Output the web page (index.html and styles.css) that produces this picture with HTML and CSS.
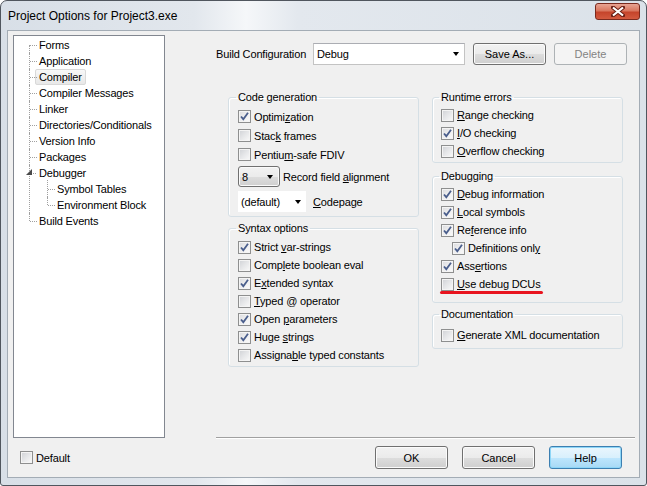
FILE: index.html
```html
<!DOCTYPE html>
<html lang="en">
<head>
    <meta charset="UTF-8">
    <title>Project Options for Project3.exe</title>
    <link rel="stylesheet" href="styles.css">
</head>
<body>
<div class="window">
    <div class="titlebar">
        <span class="title">Project Options for Project3.exe</span>
        <span class="close-btn">
            <svg width="14" height="11" viewBox="0 0 14 11"><path d="M2 1.5 L12 9.5 M12 1.5 L2 9.5" stroke="#6a1f14" stroke-width="4" stroke-linecap="square"/><path d="M2 1.5 L12 9.5 M12 1.5 L2 9.5" stroke="#fff" stroke-width="2.2"/></svg>
        </span>
    </div>
    <div class="client">
        <div class="main">
            <div class="tree">
                <ul class="tree-root">
                    <li><span class="node">Forms</span></li>
                    <li><span class="node">Application</span></li>
                    <li><span class="node"><span class="selected">Compiler</span></span></li>
                    <li><span class="node">Compiler Messages</span></li>
                    <li><span class="node">Linker</span></li>
                    <li><span class="node">Directories/Conditionals</span></li>
                    <li><span class="node">Version Info</span></li>
                    <li><span class="node">Packages</span></li>
                    <li class="open">
                        <span class="node"><svg class="expander" width="6" height="6" viewBox="0 0 6 6"><path d="M6 0 V6 H0 Z" fill="#4a4a4a"/></svg>Debugger</span>
                        <ul class="tree-sub">
                            <li><span class="node">Symbol Tables</span></li>
                            <li><span class="node">Environment Block</span></li>
                        </ul>
                    </li>
                    <li><span class="node">Build Events</span></li>
                </ul>
            </div>
            <div class="panel">
                <div class="config-row">
                    <span class="config-label">Build Configuration</span>
                    <div class="combo edit"><span>Debug</span><i class="arrow"></i></div>
                    <button class="btn">Save As...</button>
                    <button class="btn" disabled>Delete</button>
                </div>
                <div class="groups">
                    <div class="col left">
                        <fieldset class="group gen">
                            <legend>Code generation</legend>
                            <label class="check"><span class="cb on"><svg width="9" height="9" viewBox="0 0 9 9"><path d="M1 4.5 L3.3 7.2 L8 0.8" fill="none" stroke="#4a5e8c" stroke-width="1.8"/></svg></span><span>Optimi<u>z</u>ation</span></label>
                            <label class="check"><span class="cb"></span><span>Stac<u>k</u> frames</span></label>
                            <label class="check"><span class="cb"></span><span>Pentiu<u>m</u>-safe FDIV</span></label>
                            <div class="combo-row">
                                <div class="combo list"><span>8</span><i class="arrow"></i></div>
                                <span class="combo-label">Record field <u>a</u>lignment</span>
                            </div>
                            <div class="combo-row">
                                <div class="combo flat"><span>(default)</span><i class="arrow"></i></div>
                                <span class="combo-label wide"><u>C</u>odepage</span>
                            </div>
                        </fieldset>
                        <fieldset class="group syntax">
                            <legend>Syntax options</legend>
                            <label class="check"><span class="cb on"><svg width="9" height="9" viewBox="0 0 9 9"><path d="M1 4.5 L3.3 7.2 L8 0.8" fill="none" stroke="#4a5e8c" stroke-width="1.8"/></svg></span><span>Strict <u>v</u>ar-strings</span></label>
                            <label class="check"><span class="cb"></span><span>Comp<u>l</u>ete boolean eval</span></label>
                            <label class="check"><span class="cb on"><svg width="9" height="9" viewBox="0 0 9 9"><path d="M1 4.5 L3.3 7.2 L8 0.8" fill="none" stroke="#4a5e8c" stroke-width="1.8"/></svg></span><span>E<u>x</u>tended syntax</span></label>
                            <label class="check"><span class="cb"></span><span><u>T</u>yped @ operator</span></label>
                            <label class="check"><span class="cb on"><svg width="9" height="9" viewBox="0 0 9 9"><path d="M1 4.5 L3.3 7.2 L8 0.8" fill="none" stroke="#4a5e8c" stroke-width="1.8"/></svg></span><span>Open <u>p</u>arameters</span></label>
                            <label class="check"><span class="cb on"><svg width="9" height="9" viewBox="0 0 9 9"><path d="M1 4.5 L3.3 7.2 L8 0.8" fill="none" stroke="#4a5e8c" stroke-width="1.8"/></svg></span><span>Huge <u>s</u>trings</span></label>
                            <label class="check"><span class="cb"></span><span>Assigna<u>b</u>le typed constants</span></label>
                        </fieldset>
                    </div>
                    <div class="col right">
                        <fieldset class="group runtime">
                            <legend>Runtime errors</legend>
                            <label class="check"><span class="cb"></span><span><u>R</u>ange checking</span></label>
                            <label class="check"><span class="cb on"><svg width="9" height="9" viewBox="0 0 9 9"><path d="M1 4.5 L3.3 7.2 L8 0.8" fill="none" stroke="#4a5e8c" stroke-width="1.8"/></svg></span><span><u>I</u>/O checking</span></label>
                            <label class="check"><span class="cb"></span><span><u>O</u>verflow checking</span></label>
                        </fieldset>
                        <fieldset class="group debugging">
                            <legend>Debugging</legend>
                            <label class="check"><span class="cb on"><svg width="9" height="9" viewBox="0 0 9 9"><path d="M1 4.5 L3.3 7.2 L8 0.8" fill="none" stroke="#4a5e8c" stroke-width="1.8"/></svg></span><span><u>D</u>ebug information</span></label>
                            <label class="check"><span class="cb on"><svg width="9" height="9" viewBox="0 0 9 9"><path d="M1 4.5 L3.3 7.2 L8 0.8" fill="none" stroke="#4a5e8c" stroke-width="1.8"/></svg></span><span><u>L</u>ocal symbols</span></label>
                            <label class="check"><span class="cb on"><svg width="9" height="9" viewBox="0 0 9 9"><path d="M1 4.5 L3.3 7.2 L8 0.8" fill="none" stroke="#4a5e8c" stroke-width="1.8"/></svg></span><span>Re<u>f</u>erence info</span></label>
                            <label class="check indent"><span class="cb on"><svg width="9" height="9" viewBox="0 0 9 9"><path d="M1 4.5 L3.3 7.2 L8 0.8" fill="none" stroke="#4a5e8c" stroke-width="1.8"/></svg></span><span>Definitions onl<u>y</u></span></label>
                            <label class="check"><span class="cb on"><svg width="9" height="9" viewBox="0 0 9 9"><path d="M1 4.5 L3.3 7.2 L8 0.8" fill="none" stroke="#4a5e8c" stroke-width="1.8"/></svg></span><span>Ass<u>e</u>rtions</span></label>
                            <label class="check marked"><span class="cb"></span><span><u>U</u>se debug DCUs</span><span class="red-mark"></span></label>
                        </fieldset>
                        <fieldset class="group docs">
                            <legend>Documentation</legend>
                            <label class="check"><span class="cb"></span><span><u>G</u>enerate XML documentation</span></label>
                        </fieldset>
                    </div>
                </div>
            </div>
        </div>
        <div class="bottom">
            <label class="check default-check"><span class="cb"></span><span>Default</span></label>
            <button class="btn big first">OK</button>
            <button class="btn big">Cancel</button>
            <button class="btn big default">Help</button>
        </div>
    </div>
</div>
</body>
</html>
```

FILE: styles.css
```css
body {
    margin: 0;
    font-family: "Liberation Sans", Arial, sans-serif;
    font-size: 11px;
    letter-spacing: -0.15px;
    color: #000;
    background: #fff;
}

.window {
    width: 647px;
    height: 486px;
    box-sizing: border-box;
    border: 1px solid #50565e;
    border-radius: 7px 7px 3px 3px;
    padding: 0 6px 7px 6px;
    display: flex;
    flex-direction: column;
    overflow: hidden;
    background: linear-gradient(90deg, #d8dfe7 0%, #e2e7ed 30%, #f5f7f9 38%, #e3e8ee 46%, #dbe2e9 100%);
}

.titlebar {
    height: 29px;
    flex: none;
    display: flex;
    align-items: center;
    justify-content: space-between;
}

.title {
    padding-left: 1px;
    font-size: 12px;
    letter-spacing: 0;
    margin-top: 1px;
}

.close-btn {
    align-self: flex-start;
    margin-top: 2px;
    width: 45px;
    height: 17px;
    box-sizing: border-box;
    border: 1px solid #7a2a1e;
    border-radius: 3px;
    display: flex;
    align-items: center;
    justify-content: center;
    background: linear-gradient(#e8a493 0%, #d9775f 45%, #c5442b 55%, #d35a3f 100%);
}

.client {
    flex: 1;
    background: #f0f0f0;
    border: 1px solid #a3acb5;
    padding: 4px 4px 0 5px;
    display: flex;
    flex-direction: column;
}

.main {
    display: flex;
    height: 403px;
    flex: none;
}

/* tree */
.tree {
    width: 152px;
    box-sizing: border-box;
    border: 1px solid #828790;
    background: #fff;
}

.tree ul {
    list-style: none;
    margin: 0;
    padding: 0;
}

.tree-root {
    padding-top: 1px !important;
}

.tree li {
    position: relative;
}

.tree li::before {
    content: "";
    position: absolute;
    left: 15px;
    top: 0;
    bottom: 0;
    border-left: 1px dotted #a0a0a0;
}

.tree-root > li:first-child::before {
    top: 8px;
}

.tree li:last-child::before {
    bottom: auto;
    height: 8px;
}

.node {
    display: block;
    position: relative;
    height: 16px;
    line-height: 16px;
    padding-left: 25px;
    white-space: nowrap;
}

.node::before {
    content: "";
    position: absolute;
    left: 16px;
    top: 8px;
    width: 7px;
    border-top: 1px dotted #a0a0a0;
}

.open > .node::before {
    left: 19px;
    width: 3px;
}

.expander {
    position: absolute;
    left: 12px;
    top: 4px;
}

.selected {
    display: inline-block;
    margin-left: -4px;
    padding: 0 3px;
    height: 14px;
    line-height: 14px;
    border: 1px solid #d9d9d9;
    border-radius: 2px;
    background: linear-gradient(#f8f8f8, #e8e8e8);
}

.tree-sub {
    padding-left: 25px !important;
}

.tree-sub li::before {
    left: 8px;
}

.tree-sub li:first-child::before {
    top: -1px;
}

.tree-sub .node {
    padding-left: 18px;
}

.tree-sub .node::before {
    left: 9px;
    width: 7px;
}

/* right panel */
.panel {
    flex: 1;
    margin-left: 51px;
    padding-top: 8px;
    border-bottom: 1px solid #a0a0a0;
    box-shadow: 0 1px 0 #fff;
}

.config-row {
    display: flex;
    align-items: center;
    height: 22px;
}

.config-label {
    width: 97px;
}

.combo {
    box-sizing: border-box;
    display: flex;
    align-items: center;
    justify-content: space-between;
}

.arrow {
    width: 0;
    height: 0;
    border-style: solid;
    border-width: 4px 3.5px 0 3.5px;
    border-color: #000 transparent transparent transparent;
}

.combo.edit {
    width: 152px;
    height: 22px;
    background: #fff;
    border: 1px solid #c3c3c3;
    border-top-color: #abadb3;
    padding: 0 5px 0 3px;
}

.combo.list {
    width: 42px;
    height: 21px;
    border: 1px solid #707070;
    border-radius: 3px;
    padding: 0 6px 0 3px;
    background: linear-gradient(#f2f2f2 0%, #ebebeb 50%, #dddddd 51%, #cfcfcf 100%);
    box-shadow: inset 0 0 0 1px #fafafa;
}

.combo.flat {
    width: 68px;
    height: 21px;
    background: #fff;
    padding: 0 5px 0 3px;
}

.combo-row {
    display: flex;
    align-items: center;
    margin-top: 2px;
}

.combo-row + .combo-row {
    margin-top: 4px;
}

.combo-label {
    margin-left: 3px;
}

.combo-label.wide {
    margin-left: 7px;
}

.btn {
    font: inherit;
    color: #000;
    margin: 0 0 0 8px;
    padding: 0;
    width: 73px;
    height: 22px;
    border: 1px solid #707070;
    border-radius: 3px;
    background: linear-gradient(#f2f2f2 0%, #ebebeb 50%, #dddddd 51%, #cfcfcf 100%);
    box-shadow: inset 0 0 0 1px #fbfbfb;
}

.btn:disabled {
    color: #838383;
    border-color: #adb2b5;
    background: #f4f4f4;
    box-shadow: none;
}

.groups {
    display: flex;
    gap: 13px;
    padding-left: 12px;
    margin-top: 26px;
}

.col {
    width: 191px;
    display: flex;
    flex-direction: column;
}

.group {
    margin: 0;
    min-width: 0;
    border: 1px solid #d5dfe5;
    border-radius: 3px;
    box-shadow: inset 1px 1px 0 #fff;
    padding: 2px 9px 2px 9px;
}

.right .group {
    padding-left: 8px;
}

.group legend {
    padding: 0 2px;
    margin-left: -2px;
    line-height: 13px;
}

.check {
    display: flex;
    align-items: center;
    height: 18px;
    white-space: nowrap;
    position: relative;
}

.cb {
    width: 13px;
    height: 13px;
    flex: none;
    box-sizing: border-box;
    margin-right: 3px;
    border: 1px solid #8e8f8f;
    box-shadow: inset 0 0 0 1px #f4f4f4;
    background: linear-gradient(135deg, #cfd1d5 0%, #e6e7e9 50%, #fafafa 100%);
    display: flex;
    align-items: center;
    justify-content: center;
}

.cb.on {
    background: linear-gradient(135deg, #dadbde 0%, #eeeeef 50%, #fbfbfb 100%);
}

.check.indent {
    padding-left: 11px;
}

.gen {
    padding-top: 3px;
    padding-bottom: 4px;
}

.gen .check {
    height: 19px;
}

.syntax {
    margin-top: 5px;
    padding-top: 3px;
    padding-bottom: 2px;
}

.runtime {
    padding-top: 2px;
    padding-bottom: 2px;
}

.debugging {
    margin-top: 7px;
    padding-top: 2px;
    padding-bottom: 9px;
}

.docs {
    margin-top: 5px;
    padding-top: 5px;
    padding-bottom: 4px;
}

.red-mark {
    position: absolute;
    left: -1px;
    top: 16px;
    width: 103px;
    height: 3px;
    border-radius: 2px;
    background: #e8141f;
}

/* bottom bar */
.bottom {
    display: flex;
    align-items: center;
    height: 39px;
    padding: 0 13px 0 7px;
}

.btn.big {
    height: 23px;
    margin-left: 14px;
}

.btn.first {
    margin-left: auto;
}

.btn.default {
    border-color: #3c7fb1;
    box-shadow: inset 0 0 0 1px #8ed6f7;
    background: linear-gradient(#eaf6fd 0%, #d9f0fc 50%, #bee6fd 51%, #a7d9f5 100%);
}
```
